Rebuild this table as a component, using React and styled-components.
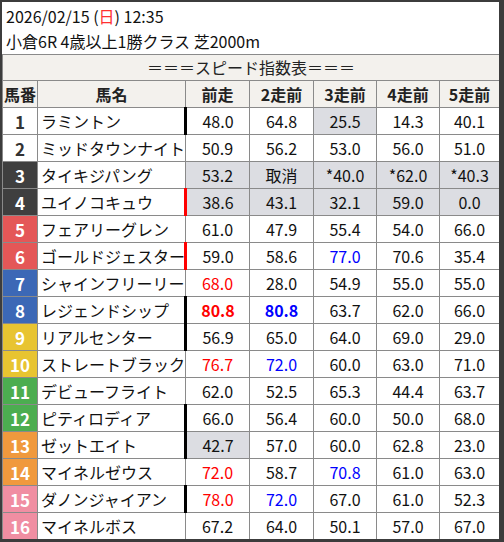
import React from 'react';
import styled, { createGlobalStyle } from 'styled-components';

const GlobalStyle = createGlobalStyle`
  html, body {
    margin: 0;
    padding: 0;
    background: #3c3c3c;
  }
  body {
    font-family: "Noto Sans CJK JP", "Noto Sans", sans-serif;
    color: #111;
  }
`;

const FRAMES = {
  1: { bg: '#ffffff', fg: '#333333' },
  2: { bg: '#ffffff', fg: '#333333' },
  3: { bg: '#3f3f3f', fg: '#ffffff' },
  4: { bg: '#3f3f3f', fg: '#ffffff' },
  5: { bg: '#e45757', fg: '#ffffff' },
  6: { bg: '#e45757', fg: '#ffffff' },
  7: { bg: '#3c68b6', fg: '#ffffff' },
  8: { bg: '#3c68b6', fg: '#ffffff' },
  9: { bg: '#e8c431', fg: '#ffffff' },
  10: { bg: '#e8c431', fg: '#ffffff' },
  11: { bg: '#4cad50', fg: '#ffffff' },
  12: { bg: '#4cad50', fg: '#ffffff' },
  13: { bg: '#f0993d', fg: '#ffffff' },
  14: { bg: '#f0993d', fg: '#ffffff' },
  15: { bg: '#f08ea2', fg: '#ffffff' },
  16: { bg: '#f08ea2', fg: '#ffffff' },
};

// cell flags: r = red, R = red bold, b = blue, B = blue bold, g = gray back
const horses = [
  { no: 1, name: 'ラミントン', bar: 'black', cells: ['48.0', '64.8', 'g|25.5', '14.3', '40.1'] },
  { no: 2, name: 'ミッドタウンナイト', cells: ['50.9', '56.2', '53.0', '56.0', '51.0'] },
  { no: 3, name: 'タイキジパング', cells: ['g|53.2', 'g|取消', 'g|*40.0', 'g|*62.0', 'g|*40.3'] },
  { no: 4, name: 'ユイノコキュウ', bar: 'red', cells: ['g|38.6', 'g|43.1', 'g|32.1', 'g|59.0', 'g|0.0'] },
  { no: 5, name: 'フェアリーグレン', cells: ['61.0', '47.9', '55.4', '54.0', '66.0'] },
  { no: 6, name: 'ゴールドジェスター', bar: 'red', cells: ['59.0', '58.6', 'b|77.0', '70.6', '35.4'] },
  { no: 7, name: 'シャインフリーリー', cells: ['r|68.0', '28.0', '54.9', '55.0', '55.0'] },
  { no: 8, name: 'レジェンドシップ', bar: 'black', cells: ['R|80.8', 'B|80.8', '63.7', '62.0', '66.0'] },
  { no: 9, name: 'リアルセンター', bar: 'black', cells: ['56.9', '65.0', '64.0', '69.0', '29.0'] },
  { no: 10, name: 'ストレートブラック', cells: ['r|76.7', 'b|72.0', '60.0', '63.0', '71.0'] },
  { no: 11, name: 'デビューフライト', cells: ['62.0', '52.5', '65.3', '44.4', '63.7'] },
  { no: 12, name: 'ピティロディア', bar: 'black', cells: ['66.0', '56.4', '60.0', '50.0', '68.0'] },
  { no: 13, name: 'ゼットエイト', bar: 'black', cells: ['g|42.7', '57.0', '60.0', '62.8', '23.0'] },
  { no: 14, name: 'マイネルゼウス', cells: ['r|72.0', '58.7', 'b|70.8', '61.0', '63.0'] },
  { no: 15, name: 'ダノンジャイアン', bar: 'black', cells: ['r|78.0', 'b|72.0', '67.0', '61.0', '52.3'] },
  { no: 16, name: 'マイネルボス', cells: ['67.2', '64.0', '50.1', '57.0', '67.0'] },
];

const COL_WIDTHS = [35, 148, 64, 64, 63, 63, 60];
const HEADS = ['前走', '2走前', '3走前', '4走前', '5走前'];

const parseCell = (raw) => {
  const [flags, value] = raw.includes('|') ? raw.split('|') : ['', raw];
  let tone = 'normal';
  if (flags.includes('r')) tone = 'red';
  if (flags.includes('R')) tone = 'redBold';
  if (flags.includes('b')) tone = 'blue';
  if (flags.includes('B')) tone = 'blueBold';
  return { value, tone, gray: flags.includes('g') };
};

const TONES = {
  normal: { color: '#111', weight: 400 },
  red: { color: '#ff0000', weight: 400 },
  redBold: { color: '#ff0000', weight: 700 },
  blue: { color: '#0000ff', weight: 400 },
  blueBold: { color: '#0000ff', weight: 700 },
};

const Frame = styled.div`
  margin: 2px 0 0 2px;
  width: 497px;
  height: 537px;
  background: #ffffff;
  overflow: hidden;
`;

const Info = styled.div`
  padding: 2px 0 0 4px;
  height: 50px;
  font-size: 16px;
  line-height: 25px;
`;

const Line = styled.div`
  white-space: nowrap;
`;

const Sun = styled.span`
  color: #ff3030;
`;

const Table = styled.table`
  width: 497px;
  border-collapse: collapse;
  table-layout: fixed;
  font-size: 16px;
`;

const Col = styled.col`
  width: ${(p) => p.$w}px;
`;

const TitleCell = styled.td`
  height: 25px;
  padding: 0;
  background: #f3f1ed;
  border: 1px solid #8a8a8a;
  text-align: center;
  line-height: 25px;
  color: #222;
`;

const HeadCell = styled.th`
  height: 26px;
  padding: 0;
  background: #f3f1ed;
  border: 1px solid #8a8a8a;
  font-weight: 700;
  text-align: center;
  color: #222;
  white-space: nowrap;
`;

const NoCell = styled.td`
  height: 26px;
  padding: 0;
  border: 1px solid #8a8a8a;
  background: ${(p) => p.$bg};
  color: ${(p) => p.$fg};
  font-weight: 700;
  font-size: 17px;
  text-align: center;
`;

const NameCell = styled.td`
  padding: 0 0 0 3px;
  border: 1px solid #8a8a8a;
  white-space: nowrap;
  overflow: hidden;
  color: #111;
`;

const ScoreCell = styled.td`
  padding: 0;
  border: 1px solid #8a8a8a;
  border-left: ${(p) => (p.$bar ? `3px solid ${p.$bar === 'red' ? '#ff0000' : '#000'}` : '1px solid #8a8a8a')};
  background: ${(p) => (p.$gray ? '#dcdde2' : '#ffffff')};
  color: ${(p) => TONES[p.$tone].color};
  font-weight: ${(p) => TONES[p.$tone].weight};
  text-align: center;
  white-space: nowrap;
`;

export default function App() {
  return (
    <>
      <GlobalStyle />
      <Frame>
        <Info>
          <Line>
            2026/02/15 (<Sun>日</Sun>) 12:35
          </Line>
          <Line>小倉6R 4歳以上1勝クラス 芝2000m</Line>
        </Info>
        <Table>
          <colgroup>
            {COL_WIDTHS.map((w, i) => (
              <Col key={i} $w={w} />
            ))}
          </colgroup>
          <thead>
            <tr>
              <TitleCell colSpan={7}>＝＝＝スピード指数表＝＝＝</TitleCell>
            </tr>
            <tr>
              <HeadCell>馬番</HeadCell>
              <HeadCell>馬名</HeadCell>
              {HEADS.map((h) => (
                <HeadCell key={h}>{h}</HeadCell>
              ))}
            </tr>
          </thead>
          <tbody>
            {horses.map((horse) => (
              <tr key={horse.no}>
                <NoCell $bg={FRAMES[horse.no].bg} $fg={FRAMES[horse.no].fg}>
                  {horse.no}
                </NoCell>
                <NameCell>{horse.name}</NameCell>
                {horse.cells.map((raw, i) => {
                  const cell = parseCell(raw);
                  return (
                    <ScoreCell
                      key={i}
                      $bar={i === 0 ? horse.bar : undefined}
                      $gray={cell.gray}
                      $tone={cell.tone}
                    >
                      {cell.value}
                    </ScoreCell>
                  );
                })}
              </tr>
            ))}
          </tbody>
        </Table>
      </Frame>
    </>
  );
}
